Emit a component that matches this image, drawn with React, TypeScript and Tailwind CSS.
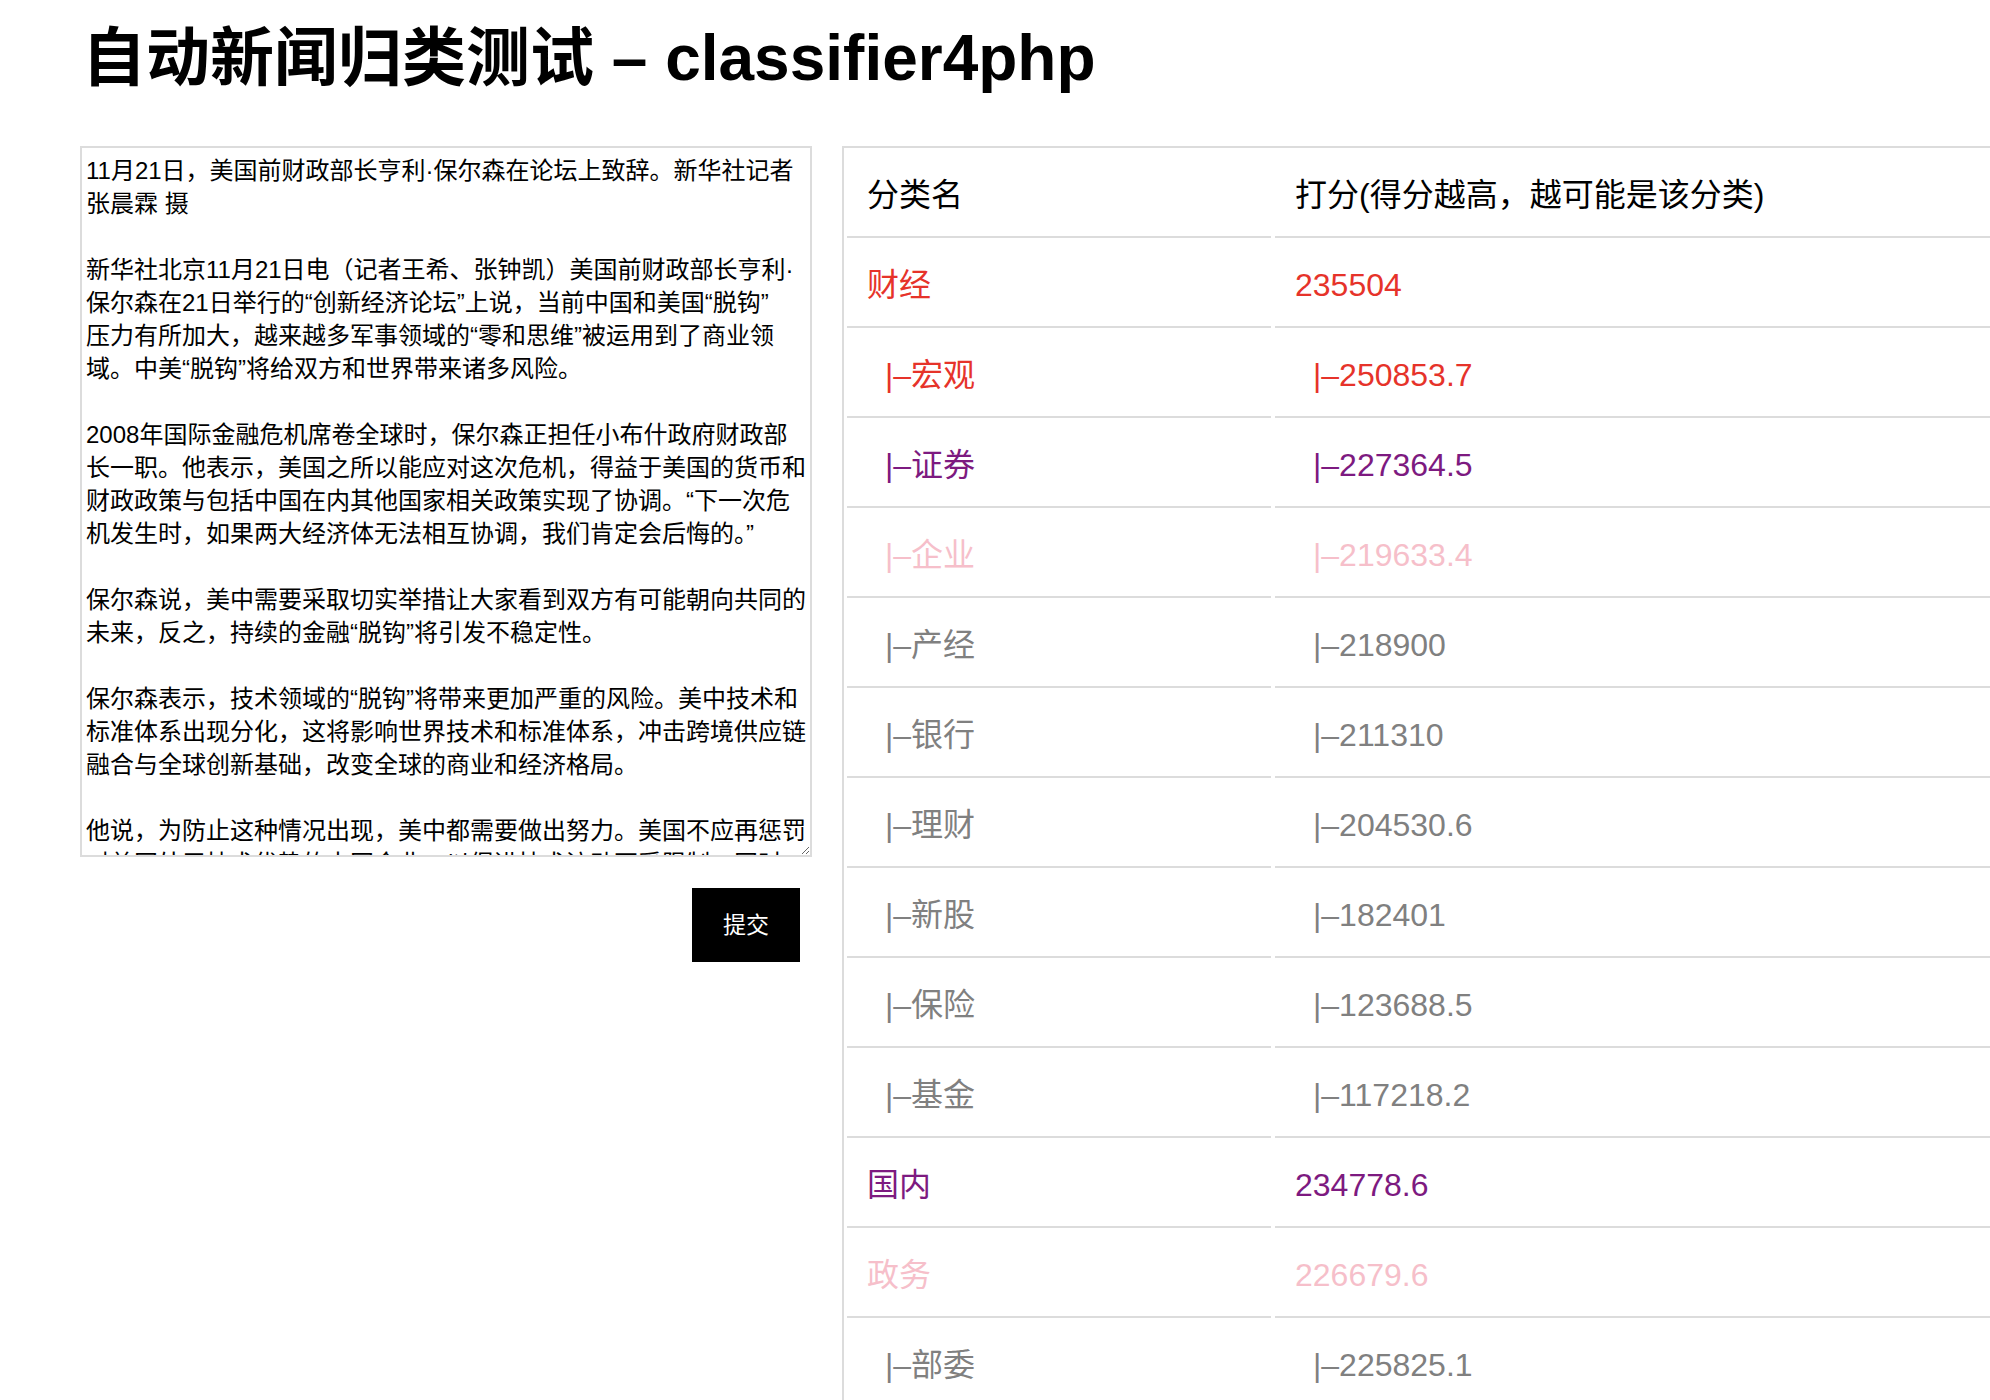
import React from "react";

const newsText = [
  "11月21日，美国前财政部长亨利·保尔森在论坛上致辞。新华社记者",
  "张晨霖 摄",
  "",
  "新华社北京11月21日电（记者王希、张钟凯）美国前财政部长亨利·",
  "保尔森在21日举行的“创新经济论坛”上说，当前中国和美国“脱钩”",
  "压力有所加大，越来越多军事领域的“零和思维”被运用到了商业领",
  "域。中美“脱钩”将给双方和世界带来诸多风险。",
  "",
  "2008年国际金融危机席卷全球时，保尔森正担任小布什政府财政部",
  "长一职。他表示，美国之所以能应对这次危机，得益于美国的货币和",
  "财政政策与包括中国在内其他国家相关政策实现了协调。“下一次危",
  "机发生时，如果两大经济体无法相互协调，我们肯定会后悔的。”",
  "",
  "保尔森说，美中需要采取切实举措让大家看到双方有可能朝向共同的",
  "未来，反之，持续的金融“脱钩”将引发不稳定性。",
  "",
  "保尔森表示，技术领域的“脱钩”将带来更加严重的风险。美中技术和",
  "标准体系出现分化，这将影响世界技术和标准体系，冲击跨境供应链",
  "融合与全球创新基础，改变全球的商业和经济格局。",
  "",
  "他说，为防止这种情况出现，美中都需要做出努力。美国不应再惩罚",
  "对美国处于技术优势的中国企业，以促进技术流动不受限制。同时，",
  "中国也应进一步开放市场，保护知识产权。",
].join("\n");

type Row = { name: string; score: string; sub?: boolean; color: string };

const rows: Row[] = [
  { name: "财经", score: "235504", color: "text-[#e6332a]" },
  { name: "宏观", score: "250853.7", sub: true, color: "text-[#e6332a]" },
  { name: "证券", score: "227364.5", sub: true, color: "text-[#7d1a80]" },
  { name: "企业", score: "219633.4", sub: true, color: "text-[#f6bfca]" },
  { name: "产经", score: "218900", sub: true, color: "text-[#808080]" },
  { name: "银行", score: "211310", sub: true, color: "text-[#808080]" },
  { name: "理财", score: "204530.6", sub: true, color: "text-[#808080]" },
  { name: "新股", score: "182401", sub: true, color: "text-[#808080]" },
  { name: "保险", score: "123688.5", sub: true, color: "text-[#808080]" },
  { name: "基金", score: "117218.2", sub: true, color: "text-[#808080]" },
  { name: "国内", score: "234778.6", color: "text-[#7d1a80]" },
  { name: "政务", score: "226679.6", color: "text-[#f6bfca]" },
  { name: "部委", score: "225825.1", sub: true, color: "text-[#808080]" },
];

function Cell({ children, className }: { children: React.ReactNode; className?: string }) {
  return (
    <div className={"h-[90px] border-b-2 border-[#dcdcdc] pl-[20px] pt-[5px] flex items-center " + (className ?? "")}>
      {children}
    </div>
  );
}

export default function App() {
  return (
    <div className="h-[1400px] w-full overflow-hidden bg-white text-black font-['Liberation_Sans','Noto_Sans_CJK_SC',sans-serif]">
      <h1 className="mt-[26px] ml-[82px] text-[64px] leading-[64px] font-bold whitespace-nowrap">
        自动新闻归类测试 – classifier4php
      </h1>

      <div className="mt-[56px] pl-[80px] flex items-start gap-[30px]">
        <div className="w-[732px] shrink-0 flex flex-col items-end">
          <textarea
            className="w-full h-[711px] border-2 border-[#dcdcdc] px-[4px] pt-[6px] pb-[2px] text-[24px] leading-[33px] text-black overflow-hidden whitespace-pre outline-none"
            wrap="off"
            defaultValue={newsText}
          />
          <button className="mt-[31px] mr-[12px] w-[108px] h-[74px] bg-black text-white text-[23px]">
            提交
          </button>
        </div>

        <div className="w-[1300px] shrink-0 border-l-2 border-t-2 border-[#dcdcdc] px-[3px]">
          <div className="grid grid-cols-[424px_1fr] gap-x-[4px] text-[32px]">
            <Cell>分类名</Cell>
            <Cell>打分(得分越高，越可能是该分类)</Cell>
            {rows.map((r) => (
              <React.Fragment key={r.name}>
                <Cell className={r.color}>
                  <span className={r.sub ? "pl-[18px]" : ""}>{r.sub ? "|–" + r.name : r.name}</span>
                </Cell>
                <Cell className={r.color}>
                  <span className={r.sub ? "pl-[18px]" : ""}>{r.sub ? "|–" + r.score : r.score}</span>
                </Cell>
              </React.Fragment>
            ))}
          </div>
        </div>
      </div>
    </div>
  );
}
